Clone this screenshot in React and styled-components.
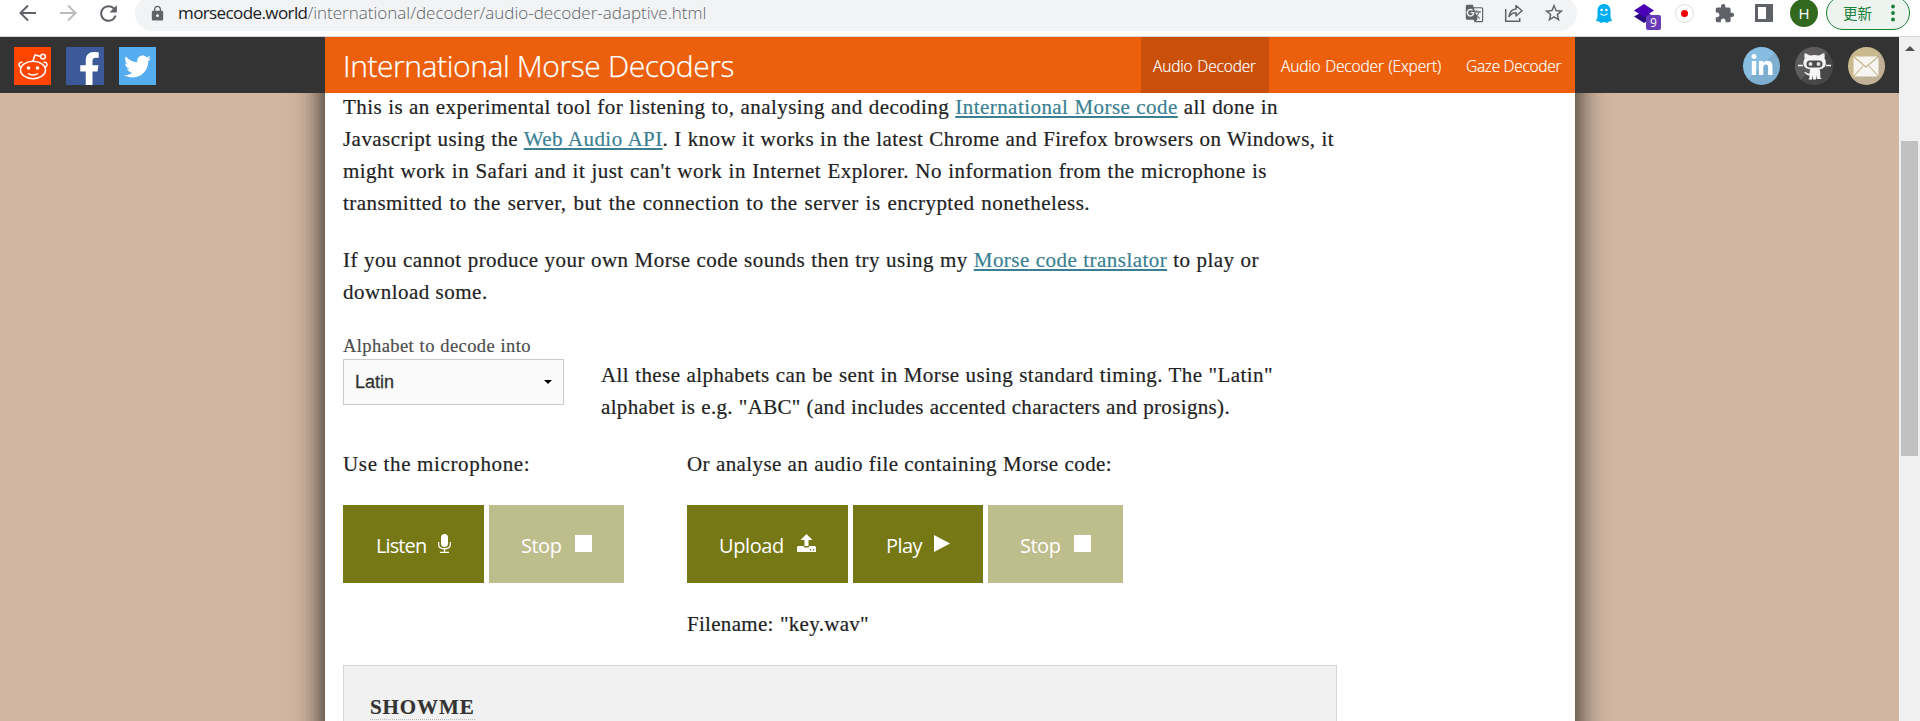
import React from 'react';
import styled, { createGlobalStyle } from 'styled-components';
import { MdRefresh, MdLock, MdGTranslate, MdStarBorder, MdExtension } from 'react-icons/md';
import { FaTwitter, FaFacebookF, FaLinkedinIn } from 'react-icons/fa';

const sans = '"Open Sans", "Noto Sans", sans-serif';
const serif = '"Liberation Serif", serif';

const Global = createGlobalStyle`
  * { box-sizing: border-box; }
  body { margin: 0; overflow: hidden; background: #d1b7a2; }
  svg { display: block; flex: none; }
  p, h1, h2 { margin: 0; }
`;

const Screen = styled.div`
  height: 721px;
  display: flex;
  flex-direction: column;
  overflow: hidden;
`;

/* A single line of text set to a given measure */
const Line = styled.span`
  display: block;
  width: ${p => p.$w}px;
  white-space: nowrap;
  text-align: justify;
  text-align-last: justify;
  letter-spacing: ${p => p.$ls || 0}px;
`;

/* Browser toolbar */
const Toolbar = styled.div`
  flex: none;
  height: 37px;
  padding: 0 10px 10px 8px;
  background: #fff;
  border-bottom: 1px solid #d4d6d9;
  display: flex;
  align-items: center;
  color: #5f6368;
`;
const Slot = styled.div`
  flex: none;
  width: 40px;
  height: 26px;
  display: flex;
  align-items: center;
  justify-content: center;
  position: relative;
  color: ${p => p.$color || 'inherit'};
`;
const Address = styled.div`
  flex: 1;
  height: 35px;
  margin: 0 7px;
  padding: 0 3px 0 14px;
  border-radius: 18px;
  background: #f1f3f4;
  display: flex;
  align-items: center;
`;
const Url = styled.div`
  flex: 1;
  display: flex;
  padding-left: 12px;
  font: 300 17px/24px ${sans};
  color: #5f6368;
`;
const UrlHost = styled.span`
  color: #202124;
  font-weight: 400;
  letter-spacing: ${p => p.$ls}px;
`;
const UrlPath = styled.span`letter-spacing: ${p => p.$ls}px;`;
const Badge = styled.span`
  position: absolute;
  left: 22px;
  top: 15px;
  width: 15px;
  height: 15px;
  border-radius: 2px;
  background: #673ab7;
  color: #fff;
  font: 12px/15px ${sans};
  text-align: center;
`;
const Recorder = styled.div`
  width: 19px;
  height: 19px;
  border-radius: 50%;
  border: 1px solid #ddd;
  display: flex;
  align-items: center;
  justify-content: center;
  &::before { content: ''; width: 7px; height: 7px; border-radius: 50%; background: #f00000; }
`;
const Avatar = styled.div`
  flex: none;
  width: 28px;
  height: 28px;
  border-radius: 50%;
  background: #33691e;
  color: #fff;
  font: 15px/28px ${sans};
  text-align: center;
`;
const Update = styled.div`
  flex: none;
  width: 84px;
  height: 34px;
  margin-left: 2px;
  padding: 0 14px 0 16px;
  border: 1px solid #188038;
  border-radius: 17px;
  background: #edf3ee;
  color: #188038;
  font: 14.5px/20px "Noto Sans CJK SC", sans-serif;
  display: flex;
  align-items: center;
  justify-content: space-between;
`;

/* Web page */
const Viewport = styled.div`
  flex: 1;
  min-height: 0;
  display: flex;
  overflow: hidden;
`;
const Page = styled.div`
  flex: 1;
  display: flex;
  flex-direction: column;
`;
const TopBar = styled.header`
  flex: none;
  height: 56px;
  background: #333;
  display: flex;
  justify-content: space-between;
  position: relative;
  z-index: 1;
`;
const Social = styled.div`
  width: ${p => (p.$end ? 324 : 325)}px;
  padding: 10px 14px 0;
  display: flex;
  gap: 15px;
  justify-content: ${p => (p.$end ? 'flex-end' : 'flex-start')};
`;
const SocialIcon = styled.a`
  flex: none;
  width: 37.3px;
  height: 38px;
  border-radius: ${p => (p.$round ? '50%' : 0)};
  background: ${p => p.$bg};
  color: #fff;
  display: flex;
  align-items: ${p => p.$align || 'center'};
  justify-content: center;
  padding-left: ${p => p.$shift || 0}px;
  overflow: hidden;
`;
const Banner = styled.div`
  width: 1250px;
  background: #ec5f0c;
  color: #fff;
  display: flex;
  justify-content: space-between;
  padding-left: 18px;
`;
const Title = styled.h1`
  font: 300 30px/56px ${sans};
  padding-top: 1px;
  -webkit-text-stroke: 0.25px #fff;
`;
const Nav = styled.nav`
  display: flex;
`;
const NavItem = styled.a`
  width: ${p => p.$width}px;
  padding-left: 12px;
  background: ${p => (p.$active ? '#c94f0b' : 'transparent')};
  font: 300 15.5px/58px ${sans};
  -webkit-text-stroke: 0.2px #fff;
`;
const Sheet = styled.main`
  flex: 1;
  width: 1250px;
  margin: -56px 0 -60px 325px;
  background: #fff;
  box-shadow: 0 0 30px rgba(0, 0, 0, 0.92);
  padding: 54px 0 0 18px;
  font: 21px/32px ${serif};
  color: #222;
  -webkit-text-stroke-width: 0.2px;
`;
const Para = styled.p`
  margin-top: ${p => p.$top}px;
`;
const Link = styled.a`
  color: #3a7f92;
  text-decoration: underline;
  text-decoration-thickness: 2px;
  text-underline-offset: 2px;
`;
const Row = styled.div`
  display: flex;
  margin-top: ${p => p.$top || 0}px;
`;
const Field = styled.div`
  width: 258px;
`;
const Label = styled.label`
  display: block;
  font-size: 18.5px;
  line-height: 26px;
  color: #4d4d4d;
`;
const Select = styled.div`
  width: 221px;
  height: 46px;
  border: 1px solid #ccc;
  background: #fafafa;
  padding: 0 11px;
  display: flex;
  align-items: center;
  justify-content: space-between;
  font: 18px/46px "Liberation Sans", sans-serif;
  color: #333;
  -webkit-text-stroke: 0.3px #333;
`;
const Column = styled.div`
  width: ${p => p.$width}px;
`;
const Buttons = styled.div`
  display: flex;
  gap: 5px;
  margin: 25px 0;
`;
const Button = styled.div`
  width: ${p => p.$width}px;
  height: 78px;
  padding: 3px ${p => p.$right}px 0 ${p => p.$left}px;
  background: ${p => (p.$off ? '#bebd8c' : '#767815')};
  color: #fff;
  font: 400 20px/28px ${sans};
  letter-spacing: ${p => p.$ls}px;
  -webkit-text-stroke-width: 0;
  display: flex;
  align-items: center;
  justify-content: space-between;
  svg { margin-top: -5px; }
`;
const Output = styled.section`
  width: 994px;
  height: 120px;
  border: 1px solid #d5d5d5;
  background: #f1f1f1;
  margin-top: 25px;
  padding: 25px 26px;
`;
const Decoded = styled.h2`
  display: inline-block;
  height: 29px;
  border-bottom: 1px dotted #bbb;
  font: bold 21px/32px ${serif};
  letter-spacing: ${p => p.$ls}px;
  color: #333;
`;
const ScrollTrack = styled.div`
  flex: none;
  width: 21px;
  background: #f0f0f0;
  display: flex;
  flex-direction: column;
  align-items: center;
  padding-top: 9px;
`;
const ScrollThumb = styled.div`
  width: 17px;
  height: 315px;
  margin-top: 90px;
  background: #c1c1c1;
`;

const Arrow = ({ flip }) => (
  <svg width="18" height="18" viewBox="0 0 18 18" fill="none" stroke="currentColor" strokeWidth="2">
    <path d={flip ? 'M1 9h15M9 1.5L16.5 9L9 16.5' : 'M17 9H2M9 1.5L1.5 9L9 16.5'} />
  </svg>
);
const Share = () => (
  <svg width="20" height="20" viewBox="0 0 20 20" fill="none" stroke="currentColor" strokeWidth="1.5">
    <path d="M1.7 6v12.2h14V15" />
    <path d="M5 13.5C5.6 9 8 6.3 12 6V2.5l6 5.3-6 5.2V9.7C9 9.7 7 10.800 5 13.500z" strokeLinejoin="round" />
  </svg>
);
const Ghost = () => (
  <svg width="16" height="19" viewBox="0 0 16 19">
    <path d="M1.500 7C1.500 2.500 4.500 0 8 0s6.500 2.500 6.500 7v6l1.500 4-3 .5-2 1.500-3-1-3 1-2-1.500-3-.5 1.500-4z" fill="#00aef0" />
    <circle cx="5.600" cy="6" r="1.300" fill="#fff" />
    <circle cx="10.400" cy="6" r="1.300" fill="#fff" />
    <path d="M4.500 9.500c1.500 2.300 5.500 2.300 7 0" fill="none" stroke="#fff" strokeWidth="1.200" />
  </svg>
);
const Layers = () => (
  <svg width="20" height="19" viewBox="0 0 20 19">
    <path d="M0 12.500L10 7l10 5.500L10 19z" fill="#2c0a80" />
    <path d="M0 6.500L10 0l10 6.500L10 13z" fill="#4a00b4" />
  </svg>
);
const Panel = () => (
  <svg width="18" height="18" viewBox="0 0 18 18">
    <path d="M0 0h18v18H0zM3 3v12h8V3z" fill="#5f6368" fillRule="evenodd" />
  </svg>
);
const Dots = () => (
  <svg width="4" height="18" viewBox="0 0 4 18" fill="currentColor">
    <circle cx="2" cy="2.500" r="1.900" /><circle cx="2" cy="9" r="1.900" /><circle cx="2" cy="15.500" r="1.900" />
  </svg>
);
const Reddit = () => (
  <svg width="30" height="27" viewBox="0 0 30 27" fill="none" stroke="#fff" strokeWidth="1.500">
    <ellipse cx="15" cy="17" rx="12.500" ry="8.800" />
    <path d="M3 14.500C-.5 12.500 1 8.500 4.500 9.500M27 14.500c3.500-2 2-6-1.500-5M15 8l2-6 6 1.500" />
    <circle cx="25" cy="3.600" r="2.400" />
    <circle cx="10.500" cy="15" r="1.800" fill="#fff" stroke="none" />
    <circle cx="19.500" cy="15" r="1.800" fill="#fff" stroke="none" />
    <path d="M10 20.500c2.500 2 7.500 2 10 0" />
  </svg>
);
const Octocat = () => (
  <svg width="33" height="28" viewBox="0 0 33 28">
    <path d="M7 1l5 2.500a22 22 0 0 1 9 0L26 1c1 2 .8 4 .5 5.500 1.500 2 1.800 4.500.8 7.500-1 2-3.500 3-6 3.400 1 1.200 1 2.500 1 4.600v3.500l1.500 1.500H19v-4l-1 4.500h-3l-1-4.500v4.500H10.500l1-2v-2C8 23 7.500 21 6 20c2.500-.5 3.500 2 5.500 1.500 0-1.700.2-3 1-4.100C9.500 17 7 16 6 14c-1-3-.7-5.500.8-7.500C6.300 5 6 3 7 1z" fill="#f4f4f4" />
    <rect x="8.500" y="8.500" width="16" height="7" rx="3.500" fill="#4a4a4a" />
    <circle cx="12.500" cy="12" r="2" fill="#ddd" /><circle cx="20.500" cy="12" r="2" fill="#ddd" />
    <path d="M0 13.500h5M28 13.500h5" stroke="#f4f4f4" strokeWidth="1.300" />
  </svg>
);
const Envelope = () => (
  <svg width="26" height="21" viewBox="0 0 26 21">
    <rect x=".5" y=".5" width="25" height="20" rx="2" fill="#f7f5f0" />
    <path d="M1 1l12 10L25 1M1 20l9-10M25 20l-9-10" fill="none" stroke="#c4b28a" strokeWidth="1.100" />
  </svg>
);
const Mic = () => (
  <svg width="13" height="19" viewBox="0 0 13 19" fill="none" stroke="#fff" strokeWidth="1.300">
    <rect x="3" y="0" width="7" height="13" rx="3.500" fill="#fff" stroke="none" />
    <path d="M.7 8v3c0 5 11.600 5 11.600 0V8M6.500 15v3M2 18.300h9" />
  </svg>
);
const Tray = () => (
  <svg width="19" height="18" viewBox="0 0 19 18" fill="#fff">
    <path d="M9.500 0L15.500 6h-4v6h-4V6h-4z" />
    <path d="M1 12h5.500l1 1.500h4l1-1.500H18l1 1v5H0v-5zM13 15v1.500h1.200V15zM16 15v1.500h1.200V15z" fillRule="evenodd" />
  </svg>
);
const Square = () => <svg width="17" height="17"><rect width="17" height="17" fill="#fff" /></svg>;
const Triangle = () => <svg width="16" height="17"><path d="M0 0L16 8.500L0 17z" fill="#fff" /></svg>;

export default function App() {
  return (
    <Screen>
      <Global />
      <Toolbar>
        <Slot><Arrow /></Slot>
        <Slot $color="#babcbe"><Arrow flip /></Slot>
        <Slot><MdRefresh size={25} /></Slot>
        <Address>
          <MdLock size={17} />
          <Url><UrlHost $ls={-0.6}>morsecode.world</UrlHost><UrlPath $ls={0}>/international/decoder/audio-decoder-adaptive.html</UrlPath></Url>
          <Slot><MdGTranslate size={19} /></Slot>
          <Slot><Share /></Slot>
          <Slot><MdStarBorder size={22} /></Slot>
        </Address>
        <Slot><Ghost /></Slot>
        <Slot><Layers /><Badge>9</Badge></Slot>
        <Slot><Recorder /></Slot>
        <Slot><MdExtension size={21} /></Slot>
        <Slot><Panel /></Slot>
        <Slot><Avatar>H</Avatar></Slot>
        <Update>更新<Dots /></Update>
      </Toolbar>

      <Viewport>
        <Page>
          <TopBar>
            <Social>
              <SocialIcon $bg="#ff4500"><Reddit /></SocialIcon>
              <SocialIcon $bg="#3c5a9a" $align="flex-end" $shift={9}><FaFacebookF size={33} viewBox="0 0 320 490" /></SocialIcon>
              <SocialIcon $bg="#55acee"><FaTwitter size={27} /></SocialIcon>
            </Social>
            <Banner>
              <Title><Line $w={391} $ls={-0.43}>International Morse Decoders</Line></Title>
              <Nav>
                <NavItem $active $width={128}><Line $w={103} $ls={-0.15}>Audio Decoder</Line></NavItem>
                <NavItem $width={185}><Line $w={160} $ls={-0.15}>Audio Decoder (Expert)</Line></NavItem>
                <NavItem $width={121}><Line $w={95} $ls={-0.3}>Gaze Decoder</Line></NavItem>
              </Nav>
            </Banner>
            <Social $end>
              <SocialIcon $round $bg="linear-gradient(135deg, #88bde2 50%, #7eaed0 50%)"><FaLinkedinIn size={24} /></SocialIcon>
              <SocialIcon $round $bg="linear-gradient(135deg, #5e5b5c 50%, #484848 50%)"><Octocat /></SocialIcon>
              <SocialIcon $round $bg="linear-gradient(135deg, #cbb98e 50%, #c0b196 50%)"><Envelope /></SocialIcon>
            </Social>
          </TopBar>

          <Sheet>
            <Para>
              <Line $w={935} $ls={0.45}>This is an experimental tool for listening to, analysing and decoding <Link>International Morse code</Link> all done in</Line>
              <Line $w={991} $ls={0.45}>Javascript using the <Link>Web Audio API</Link>. I know it works in the latest Chrome and Firefox browsers on Windows, it</Line>
              <Line $w={924} $ls={0.45}>might work in Safari and it just can't work in Internet Explorer. No information from the microphone is</Line>
              <Line $w={747} $ls={0.45}>transmitted to the server, but the connection to the server is encrypted nonetheless.</Line>
            </Para>
            <Para $top={25}>
              <Line $w={916} $ls={0.45}>If you cannot produce your own Morse code sounds then try using my <Link>Morse code translator</Link> to play or</Line>
              <Line $w={144} $ls={0.5}>download some.</Line>
            </Para>
            <Row $top={25}>
              <Field>
                <Label><Line $w={188} $ls={0.42}>Alphabet to decode into</Line></Label>
                <Select>
                  Latin
                  <svg width="8" height="4" viewBox="0 0 8 4"><path d="M0 0h8L4 4z" fill="#000" /></svg>
                </Select>
              </Field>
              <Para $top={26}>
                <Line $w={672} $ls={0.42}>All these alphabets can be sent in Morse using standard timing. The "Latin"</Line>
                <Line $w={629} $ls={0.34}>alphabet is e.g. "ABC" (and includes accented characters and prosigns).</Line>
              </Para>
            </Row>
            <Row $top={25}>
              <Column $width={344}>
                <Line $w={187} $ls={0.65}>Use the microphone:</Line>
                <Buttons>
                  <Button $width={141} $left={33} $right={33} $ls={-0.9}>Listen<Mic /></Button>
                  <Button $off $width={135} $left={32} $right={32} $ls={-0.5}>Stop<Square /></Button>
                </Buttons>
              </Column>
              <Column $width={640}>
                <Line $w={425} $ls={0.4}>Or analyse an audio file containing Morse code:</Line>
                <Buttons>
                  <Button $width={161} $left={32} $right={32} $ls={-0.4}>Upload<Tray /></Button>
                  <Button $width={130} $left={33} $right={33} $ls={-0.6}>Play<Triangle /></Button>
                  <Button $off $width={135} $left={32} $right={32} $ls={-0.5}>Stop<Square /></Button>
                </Buttons>
                <Line $w={182} $ls={0.3}>Filename: "key.wav"</Line>
              </Column>
            </Row>
            <Output><Decoded $ls={0.9}>SHOWME</Decoded></Output>
          </Sheet>
        </Page>
        <ScrollTrack>
          <svg width="10" height="5" viewBox="0 0 10 5"><path d="M0 5L5 0L10 5z" fill="#505050" /></svg>
          <ScrollThumb />
        </ScrollTrack>
      </Viewport>
    </Screen>
  );
}
